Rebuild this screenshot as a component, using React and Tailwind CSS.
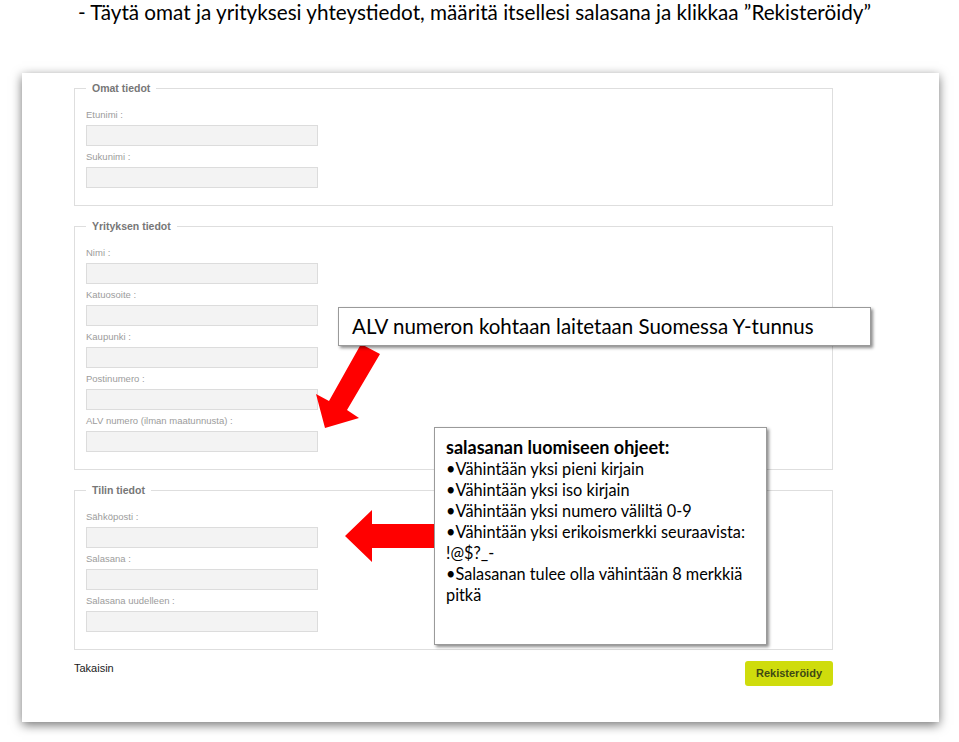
import React from "react";

const Field = ({ label }) => (
  <div>
    <div className="h-[21px] pt-[2px] flex items-center text-[9.5px] text-[#9c9c9c] font-['Liberation_Sans',Arial,sans-serif]">
      {label}
    </div>
    <div className="h-[21px] w-[232px] bg-[#f3f3f3] border border-[#dcdcdc]" />
  </div>
);

const Group = ({ title, fields, className = "" }) => (
  <fieldset className={"w-[759px] border border-[#dedede] px-[11px] pt-[10px] pb-[17px] " + className}>
    <legend className="ml-0 px-[6px] leading-[12px] text-[10.5px] font-bold text-[#777] font-['Liberation_Sans',Arial,sans-serif]">
      {title}
    </legend>
    {fields.map((f) => (
      <Field key={f} label={f} />
    ))}
  </fieldset>
);

export default function App() {
  return (
    <div className="relative w-[959px] h-[742px] bg-white overflow-hidden">
      <div className="h-[26px] pl-[78px] flex items-center whitespace-nowrap text-[20.7px] text-black font-['Lato','Open_Sans',sans-serif]">
        - Täytä omat ja yrityksesi yhteystiedot, määritä itsellesi salasana ja klikkaa ”Rekisteröidy”
      </div>

      <div className="mt-[47px] ml-[22px] w-[917px] bg-white pl-[52px] pt-[9px] pb-[36px] shadow-[0px_3px_10px_rgba(0,0,0,0.55)]">
        <Group title="Omat tiedot" fields={["Etunimi :", "Sukunimi :"]} />
        <Group
          className="mt-[14px]"
          title="Yrityksen tiedot"
          fields={["Nimi :", "Katuosoite :", "Kaupunki :", "Postinumero :", "ALV numero (ilman maatunnusta) :"]}
        />
        <Group
          className="mt-[14px]"
          title="Tilin tiedot"
          fields={["Sähköposti :", "Salasana :", "Salasana uudelleen :"]}
        />
        <div className="mt-[11px] w-[759px] flex justify-between items-start">
          <div className="leading-[14px] text-[11px] text-[#1a1a1a] font-['Liberation_Sans',Arial,sans-serif]">
            Takaisin
          </div>
          <div className="h-[25px] w-[88px] rounded-[3px] bg-[#cfdc0c] flex items-center justify-center text-[11px] font-bold text-[#3f4a14] font-['Liberation_Sans',Arial,sans-serif]">
            Rekisteröidy
          </div>
        </div>
      </div>

      {/* red arrows */}
      <svg className="absolute left-0 top-0 pointer-events-none" width="959" height="742" viewBox="0 0 959 742">
        <polygon points="361,344 380,354 347,410 359,418 325,428 316,394 329,401" fill="#ff0000" />
        <polygon points="345,536 372,510 372,524 434,524 434,548 372,548 372,562" fill="#ff0000" />
      </svg>

      {/* callout 1 */}
      <div className="absolute left-[338px] top-[307px] w-[533px] h-[39px] bg-white border border-[#9a9a9a] shadow-[2px_2px_3px_rgba(0,0,0,0.45)] pl-[13px] flex items-center whitespace-nowrap text-[20.5px] text-black font-['Lato','Open_Sans',sans-serif]">
        ALV numeron kohtaan laitetaan Suomessa Y-tunnus
      </div>

      {/* callout 2 */}
      <div className="absolute left-[434px] top-[427px] w-[333px] h-[218px] bg-white border border-[#9a9a9a] shadow-[2px_2px_3px_rgba(0,0,0,0.45)] pl-[11px] pt-[9px] text-[16.3px] leading-[21px] text-black whitespace-nowrap font-['Lato','Open_Sans',sans-serif]">
        <div className="font-bold text-[18px]">salasanan luomiseen ohjeet:</div>
        <div>•Vähintään yksi pieni kirjain</div>
        <div>•Vähintään yksi iso kirjain</div>
        <div>•Vähintään yksi numero väliltä 0-9</div>
        <div>•Vähintään yksi erikoismerkki seuraavista:</div>
        <div>!@$?_-</div>
        <div>•Salasanan tulee olla vähintään 8 merkkiä</div>
        <div>pitkä</div>
      </div>
    </div>
  );
}
